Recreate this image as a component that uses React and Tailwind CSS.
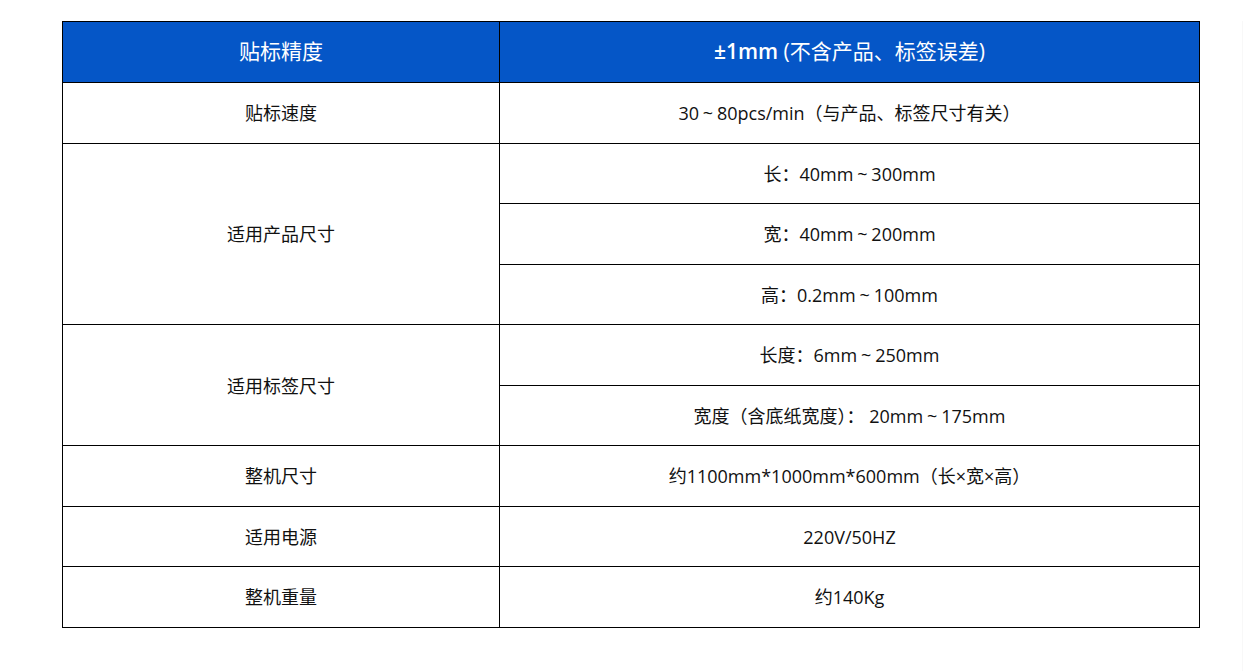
function T({ s }) {
  const parts = s.split("～");
  return (
    <>
      {parts.map((p, i) => (
        <span key={i}>
          {i > 0 && <span className="inline-block w-[1em] text-center">~</span>}
          {p}
        </span>
      ))}
    </>
  );
}

export default function App() {
  const font = { fontFamily: '"Open Sans","Noto Sans CJK SC",sans-serif' };
  const td = "border border-black text-center text-[18px] text-[#111] pt-[2px]";
  const rows = [
    ["贴标速度", ["30～80pcs/min（与产品、标签尺寸有关）"]],
    ["适用产品尺寸", ["长：40mm～300mm", "宽：40mm～200mm", "高：0.2mm～100mm"]],
    ["适用标签尺寸", ["长度：6mm～250mm", "宽度（含底纸宽度）： 20mm～175mm"]],
    ["整机尺寸", ["约1100mm*1000mm*600mm（长×宽×高）"]],
    ["适用电源", ["220V/50HZ"]],
    ["整机重量", ["约140Kg"]],
  ];
  return (
    <div className="w-[1243px] h-[671px] bg-white pt-[21px] pl-[62px] flex" style={font}>
      <table className="border-collapse w-[1138px] h-fit table-fixed">
        <colgroup>
          <col className="w-[437px]" />
          <col />
        </colgroup>
        <tbody>
          <tr className="h-[61px] bg-[#0556c7] text-white">
            <td className="border border-black text-center text-[21px]">贴标精度</td>
            <td className="border border-black text-center text-[21px]">
              <span className="font-semibold">±1mm</span> (不含产品、标签误差)
            </td>
          </tr>
          {rows.map(([label, vals], i) =>
            vals.map((v, j) => (
              <tr key={i + "-" + j} className="h-[60.5px]">
                {j === 0 && (
                  <td className={td} rowSpan={vals.length}>
                    {label}
                  </td>
                )}
                <td className={td}>
                  <T s={v} />
                </td>
              </tr>
            ))
          )}
        </tbody>
      </table>
      <div className="flex-1" />
      <div className="w-px h-full bg-[#f8f8f8]" />
    </div>
  );
}
